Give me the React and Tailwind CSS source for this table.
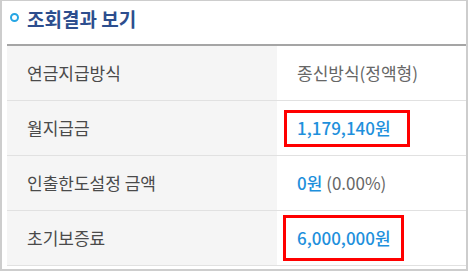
import React from 'react';

const rows = [
    { label: '연금지급방식', value: <span className="text-[#666]">종신방식(정액형)</span> },
    {
        label: '월지급금',
        value: <span className="text-[#1e90dc] font-medium">1,179,140원</span>,
        box: 'absolute -left-[13px] -right-[19px] -top-[5px] -bottom-[6px]',
    },
    {
        label: '인출한도설정 금액',
        value: (
            <>
                <span className="text-[#1e90dc] font-medium">0원</span>
                <span className="text-[#666]"> (0.00%)</span>
            </>
        ),
    },
    {
        label: '초기보증료',
        value: <span className="text-[#1e90dc] font-medium">6,000,000원</span>,
        box: 'absolute -left-[14px] -right-[13px] -top-[10px] -bottom-[10px]',
    },
];

const App = () => {
    return (
        <div
            className="w-[468px] h-[271px] bg-white border-t border-x-2 border-b-2 border-[#cdcdcd] pl-[5px] flex flex-col"
            style={{ fontFamily: '"Noto Sans CJK KR", "Noto Sans", sans-serif' }}
        >
            <div className="h-[43px] flex items-center gap-[8px] pl-[3px] pb-[8px]">
                <span className="w-[9px] h-[9px] -mt-[3px] rounded-full border-2 border-[#27a6e4]" />
                <h3 className="text-[19px] font-bold text-[#2d4e8e] leading-none">조회결과 보기</h3>
            </div>
            <div className="border-t-2 border-[#a5a5a5]">
                {rows.map((r) => (
                    <div key={r.label} className="flex h-[55px] border-b border-[#e1e1e1] text-[17px]">
                        <div className="w-[270px] bg-[#f5f5f5] flex items-center pl-[20px] text-[#4a4a4a]">
                            {r.label}
                        </div>
                        <div className="flex-1 flex items-center pl-[20px]">
                            <span className="relative">
                                {r.value}
                                {r.box && <span className={`${r.box} border-[3px] border-[#ff0000]`} />}
                            </span>
                        </div>
                    </div>
                ))}
            </div>
        </div>
    );
};

export default App;
